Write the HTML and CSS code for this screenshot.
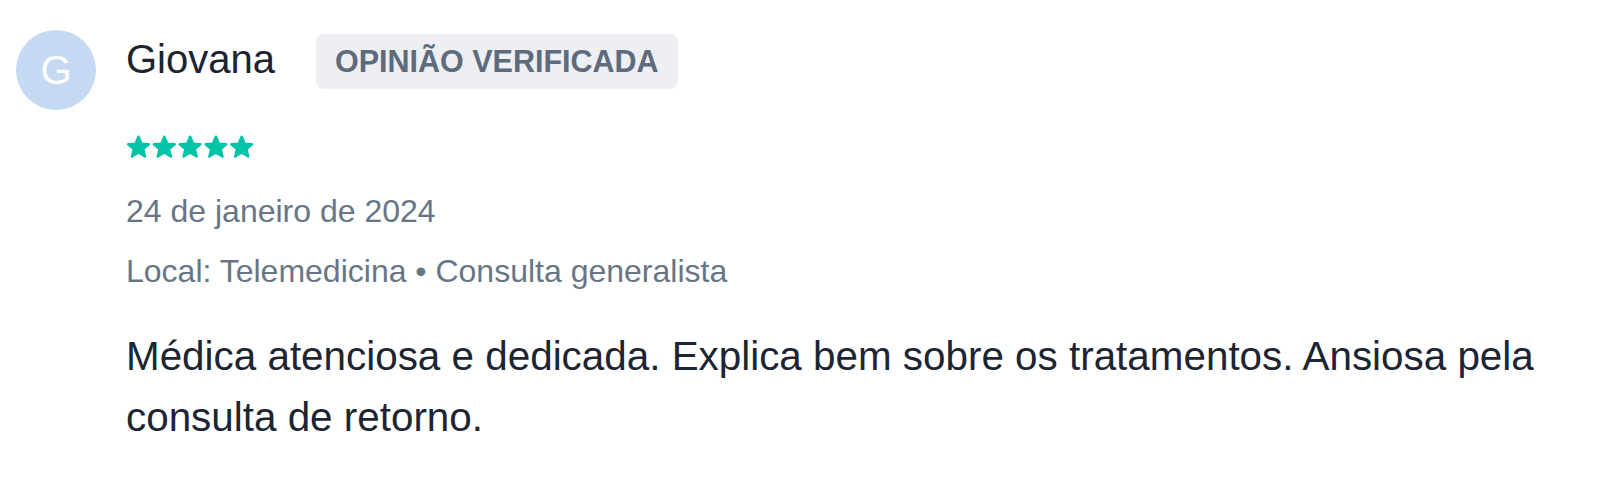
FILE: index.html
```html
<!DOCTYPE html>
<html lang="pt-BR">
<head>
<meta charset="utf-8">
<title>Opinião</title>
<link rel="stylesheet" href="styles.css">
</head>
<body>
<div class="review">
  <div class="avatar">G</div>
  <div class="content">
    <div class="header">
      <span class="name">Giovana</span>
      <span class="badge">OPINIÃO VERIFICADA</span>
    </div>
    <div class="stars">
      <svg width="128" height="25" viewBox="0 0 128 25" aria-label="5 estrelas">
        <g fill="#00c4a7" stroke="#00c4a7" stroke-width="2.6" stroke-linejoin="round">
          <polygon points="12.5,1.8 15.4,8.8 22.8,9.3 17.1,14.1 19,21.5 12.5,17.5 6,21.5 7.9,14.1 2.2,9.3 9.6,8.8"/>
          <polygon transform="translate(25.8 0)" points="12.5,1.8 15.4,8.8 22.8,9.3 17.1,14.1 19,21.5 12.5,17.5 6,21.5 7.9,14.1 2.2,9.3 9.6,8.8"/>
          <polygon transform="translate(51.6 0)" points="12.5,1.8 15.4,8.8 22.8,9.3 17.1,14.1 19,21.5 12.5,17.5 6,21.5 7.9,14.1 2.2,9.3 9.6,8.8"/>
          <polygon transform="translate(77.4 0)" points="12.5,1.8 15.4,8.8 22.8,9.3 17.1,14.1 19,21.5 12.5,17.5 6,21.5 7.9,14.1 2.2,9.3 9.6,8.8"/>
          <polygon transform="translate(103.2 0)" points="12.5,1.8 15.4,8.8 22.8,9.3 17.1,14.1 19,21.5 12.5,17.5 6,21.5 7.9,14.1 2.2,9.3 9.6,8.8"/>
        </g>
      </svg>
    </div>
    <div class="date">24 de janeiro de 2024</div>
    <div class="meta">Local: Telemedicina • Consulta generalista</div>
    <p class="text">Médica atenciosa e dedicada. Explica bem sobre os tratamentos. Ansiosa pela consulta de retorno.</p>
  </div>
</div>
</body>
</html>
```

FILE: styles.css
```css
html, body {
  margin: 0;
  padding: 0;
  background: #ffffff;
}

body {
  font-family: "Liberation Sans", Arial, sans-serif;
  width: 1600px;
  height: 480px;
  overflow: hidden;
}

.review {
  display: flex;
  align-items: flex-start;
  gap: 30px;
  padding: 30px 16px 0 16px;
}

.avatar {
  flex: 0 0 80px;
  width: 80px;
  height: 80px;
  border-radius: 50%;
  background: #c5d9f3;
  color: #ffffff;
  font-size: 40px;
  display: flex;
  align-items: center;
  justify-content: center;
}

.content {
  flex: 1;
  padding-top: 4px;
}

.header {
  display: flex;
  align-items: center;
  gap: 41px;
  height: 55px;
}

.name {
  font-size: 40px;
  color: #1b2430;
  line-height: 46px;
  margin-top: -6px;
}

.badge {
  display: inline-flex;
  align-items: center;
  height: 55px;
  padding: 0 19px;
  border-radius: 8px;
  background: #edeff2;
  color: #5d6b7c;
  font-weight: bold;
  font-size: 30.5px;
}

.stars {
  margin-top: 46px;
  height: 25px;
  line-height: 0;
}

.date {
  margin-top: 31px;
  font-size: 32px;
  line-height: 40px;
  color: #677686;
}

.meta {
  margin-top: 20px;
  font-size: 32px;
  line-height: 40px;
  color: #677686;
}

.text {
  margin: 35px 0 0 0;
  font-size: 40.4px;
  line-height: 61px;
  color: #1d2533;
}
```
